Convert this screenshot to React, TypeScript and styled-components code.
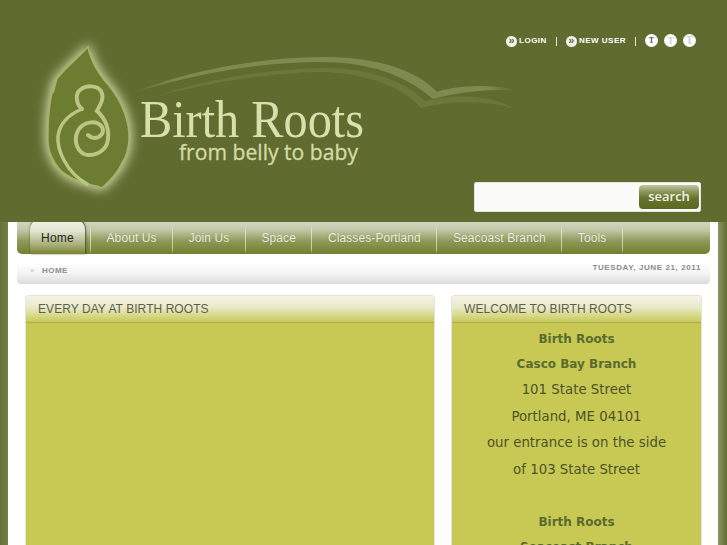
import styled, { createGlobalStyle } from 'styled-components';

const GlobalStyle = createGlobalStyle`
  html, body {
    margin: 0;
    padding: 0;
    height: 545px;
    overflow: hidden;
    background: #5f6b2f;
    font-family: "Liberation Sans", Arial, sans-serif;
  }
`;

const Header = styled.header`
  height: 222px;
  display: flex;
  justify-content: space-between;
  padding-right: 26px;
  box-sizing: border-box;
`;

const LogoSvg = styled.svg`
  display: block;
  flex: none;
  overflow: visible;
`;

const HeaderRight = styled.div`
  display: flex;
  flex-direction: column;
  align-items: flex-end;
  justify-content: space-between;
  padding: 33px 0 10px;
`;

const TopLinks = styled.div`
  display: flex;
  align-items: center;
  height: 14px;
  margin-right: 5px;
  color: #fff;
  font-size: 8px;
  font-weight: bold;
  letter-spacing: 0.5px;
`;

const TopLink = styled.a`
  display: flex;
  align-items: center;
  gap: 2px;
`;

const Arrow = styled.span`
  width: 11px;
  height: 11px;
  margin-top: 2px;
  border-radius: 50%;
  background: #f4f4ee;
  color: #5f6b2f;
  font-size: 11px;
  line-height: 9px;
  text-align: center;
  letter-spacing: 0;
`;

const Pipe = styled.span`
  width: 1px;
  height: 9px;
  margin: 2px 9px 0;
  background: #e8e8dc;
`;

const SizeDots = styled.div`
  display: flex;
  gap: 6px;
`;

const SizeDot = styled.span<{ $dim?: boolean; $size: number }>`
  width: 13px;
  height: 13px;
  border-radius: 50%;
  background: #fff;
  color: ${(p) => (p.$dim ? '#d2d2d2' : '#55555f')};
  font-family: "Liberation Serif", serif;
  font-size: ${(p) => p.$size}px;
  line-height: 13px;
  text-align: center;
  letter-spacing: 0;
`;

const SearchBox = styled.form`
  display: flex;
  justify-content: space-between;
  width: 227px;
  height: 30px;
  margin: 0;
  padding: 2px 1px 2px 3px;
  box-sizing: border-box;
  background: #fbfbf9;
  border: 1px solid #e4e4dc;
  border-radius: 2px;
`;

const SearchInput = styled.input`
  flex: 1;
  min-width: 0;
  border: 0;
  background: transparent;
  outline: none;
`;

const SearchButton = styled.button`
  flex: none;
  width: 60px;
  padding: 0 0 2px;
  border: 0;
  border-radius: 4px;
  background: linear-gradient(#c2c7a8 0%, #8c9659 28%, #66742c 55%, #5a6a22 100%);
  color: #f1f2e8;
  font-family: "Open Sans", sans-serif;
  font-size: 13px;
  font-weight: 600;
`;

const Page = styled.div`
  padding: 0 17px;
  height: 323px;
  overflow: hidden;
  background: linear-gradient(
    90deg,
    #66723a 0,
    #737f47 8px,
    #fff 8px,
    #fff 718px,
    #8c9666 718px,
    #5f6b2f 727px
  );
`;

const Nav = styled.nav`
  display: flex;
  height: 32px;
  padding-left: 13px;
  border-radius: 0 0 5px 5px;
  background: linear-gradient(#d3d6bf 0%, #c2c7a6 25%, #8e9957 60%, #727f2f 100%);
`;

const NavItem = styled.a`
  display: flex;
  align-items: center;
  height: 31px;
  padding: 0 15.5px;
  border-right: 1px solid;
  border-image: linear-gradient(transparent 10%, rgba(240, 242, 225, 0.7) 35%, rgba(240, 242, 225, 0.6) 85%, transparent) 1;
  color: #eef0e2;
  font-size: 12px;
  letter-spacing: 0.1px;
  text-shadow: 0 0 1px rgba(70, 80, 30, 0.5);
`;

const HomeTab = styled.a`
  display: flex;
  align-items: center;
  box-sizing: border-box;
  width: 55px;
  height: 36px;
  margin: -4px 5px 0 0;
  padding: 3px 0 0 11px;
  border-radius: 12px 12px 0 0;
  background: linear-gradient(#f0f1e6 0%, #e4e6d4 35%, #a6ae78 75%, #77832f 100%);
  box-shadow: 0 -1px 2px rgba(67, 77, 28, 0.7), 1px 0 2px rgba(60, 70, 25, 0.7);
  color: #23261a;
  font-size: 12px;
  letter-spacing: 0.25px;
`;

const NavDivider = styled.span`
  width: 1px;
  height: 32px;
  background: linear-gradient(transparent 10%, rgba(240, 242, 225, 0.7) 35%, rgba(240, 242, 225, 0.6) 85%, transparent);
`;

const Crumbs = styled.div`
  display: flex;
  justify-content: space-between;
  height: 22px;
  margin-top: 8px;
  padding: 0 9px 0 13px;
  border-radius: 0 0 4px 4px;
  background: linear-gradient(#fff 0%, #f6f6f6 45%, #dcdcdc 100%);
  color: #8d8d8d;
  font-size: 8px;
  font-weight: bold;
  letter-spacing: 0.5px;
`;

const CrumbTrail = styled.span`
  display: flex;
  gap: 7px;
  margin-top: 1px;
  align-items: center;
  height: 15px;
`;

const CrumbArrow = styled.span`
  color: #c0c0c0;
  font-weight: normal;
`;

const CrumbDate = styled.span`
  margin-top: 1px;
  letter-spacing: 0.6px;
`;

const Columns = styled.div`
  display: flex;
  justify-content: space-between;
  margin-top: 11px;
  padding: 0 8px;
`;

const Panel = styled.section<{ $width: number }>`
  width: ${(p) => p.$width}px;
  height: 300px;
  flex: none;
  box-sizing: border-box;
  background: #c8c955;
  border: 1px solid #e3e3da;
  border-bottom: 0;
  border-radius: 4px 4px 0 0;
`;

const PanelTitle = styled.h3`
  height: 27px;
  margin: 0;
  padding-left: 12px;
  box-sizing: border-box;
  background: linear-gradient(#f4f4e6 0%, #e8e9c4 45%, #c9ca58 100%);
  border-bottom: 1px solid #a9ab50;
  color: #5c5e50;
  font-size: 12px;
  font-weight: normal;
  line-height: 27px;
  letter-spacing: 0.06px;
`;

const PanelBody = styled.div`
  padding-top: 4px;
  text-align: center;
  font-family: "DejaVu Sans", Verdana, sans-serif;
  font-size: 13.33px;
  line-height: 26.5px;
  color: #4c5327;
`;

const Branch = styled.strong`
  display: block;
  color: #5a6b2e;
  font-size: 12px;
  line-height: 25px;
`;

const AddressLine = styled.div`
  min-height: 26.5px;
`;

const Logo = () => (
  <LogoSvg width="470" height="222" viewBox="0 0 470 222">
    <defs>
      <filter id="glow" x="-30%" y="-30%" width="160%" height="160%">
        <feGaussianBlur stdDeviation="6" />
      </filter>
      <linearGradient id="swoosh" gradientUnits="userSpaceOnUse" x1="130" x2="518" y1="0" y2="0">
        <stop offset="0" stopColor="#7d8a50" stopOpacity="0.1" />
        <stop offset="0.12" stopColor="#7d8a50" />
        <stop offset="0.92" stopColor="#7d8a50" />
        <stop offset="1" stopColor="#7d8a50" stopOpacity="0" />
      </linearGradient>
    </defs>
    <path
      d="M130 94C165 78 240 58 320 57C370 56 415 68 437 92C450 87 490 82 518 91C490 88 460 92 433 99C405 75 370 62 320 62C250 62 180 78 130 94Z"
      fill="url(#swoosh)"
    />
    <path
      d="M157 96C190 84 250 70 320 68C365 67 405 80 425 101C445 96 485 92 513 108C485 100 450 101 421 108C400 85 365 73 320 72C265 73 205 84 157 96Z"
      fill="#6b7839"
    />
    <path
      d="M88 47C90 58 95 70 110 87C122 102 130 122 129 140C128 155 122 170 102 188C88 184 70 180 60 170C52 160 47 150 48 135C48 115 50 95 56 80C65 68 78 58 88 47Z"
      fill="#e2e6b8"
      stroke="#e2e6b8"
      strokeWidth="4"
      filter="url(#glow)"
    />
    <path
      d="M88 47C90 58 95 70 110 87C122 102 130 122 129 140C128 155 122 170 102 188C88 184 70 180 60 170C52 160 47 150 48 135C48 115 50 95 56 80C65 68 78 58 88 47Z"
      fill="#6c7c30"
      stroke="#a6b26c"
      strokeWidth="1.5"
    />
    <g fill="none" stroke="#a6b26c" strokeWidth="2.5" strokeLinecap="round">
      <path d="M56 80L53 92" />
      <path d="M53 163C62 176 80 184 98 187" />
      <path d="M124 160L118 172" />
    </g>
    <g fill="none" stroke="#bcc583" strokeWidth="4" strokeLinecap="round">
      <path d="M82 109C76 104 75 94 80 90C86 85 97 85 101 91C105 98 100 105 97 111C105 118 111 130 107 144C103 153 92 157 84 154C76 150 73 138 79 129C85 121 97 120 102 127C105 133 100 138 94 138C92 138 90 137 88 135" />
      <path d="M82 109C70 114 60 122 58 136C57 150 66 172 87 184" strokeWidth="3.5" />
    </g>
    <text x="140" y="137" fill="#dadfae" fontFamily='"Liberation Serif", serif' fontSize="52" textLength="224" lengthAdjust="spacingAndGlyphs">
      Birth Roots
    </text>
    <text x="179" y="160" fill="#d5dba6" stroke="#d5dba6" strokeWidth="0.3" fontFamily='"Open Sans", sans-serif' fontSize="21" textLength="179" lengthAdjust="spacingAndGlyphs">
      from belly to baby
    </text>
  </LogoSvg>
);

const navItems = ['About Us', 'Join Us', 'Space', 'Classes-Portland', 'Seacoast Branch', 'Tools'];

export default function App() {
  return (
    <>
      <GlobalStyle />
      <Header>
        <Logo />
        <HeaderRight>
          <TopLinks>
            <TopLink>
              <Arrow>»</Arrow>LOGIN
            </TopLink>
            <Pipe />
            <TopLink>
              <Arrow>»</Arrow>NEW USER
            </TopLink>
            <Pipe />
            <SizeDots>
              <SizeDot $size={8}>T</SizeDot>
              <SizeDot $dim $size={10}>T</SizeDot>
              <SizeDot $dim $size={12}>T</SizeDot>
            </SizeDots>
          </TopLinks>
          <SearchBox onSubmit={(e) => e.preventDefault()}>
            <SearchInput />
            <SearchButton>search</SearchButton>
          </SearchBox>
        </HeaderRight>
      </Header>
      <Page>
        <Nav>
          <HomeTab>Home</HomeTab>
          <NavDivider />
          {navItems.map((item) => (
            <NavItem key={item}>{item}</NavItem>
          ))}
        </Nav>
        <Crumbs>
          <CrumbTrail>
            <CrumbArrow>»</CrumbArrow>HOME
          </CrumbTrail>
          <CrumbDate>TUESDAY, JUNE 21, 2011</CrumbDate>
        </Crumbs>
        <Columns>
          <Panel $width={410}>
            <PanelTitle>EVERY DAY AT BIRTH ROOTS</PanelTitle>
          </Panel>
          <Panel $width={251}>
            <PanelTitle>WELCOME TO BIRTH ROOTS</PanelTitle>
            <PanelBody>
              <Branch>Birth Roots</Branch>
              <Branch>Casco Bay Branch</Branch>
              <AddressLine>101 State Street</AddressLine>
              <AddressLine>Portland, ME 04101</AddressLine>
              <AddressLine>our entrance is on the side</AddressLine>
              <AddressLine>of 103 State Street</AddressLine>
              <AddressLine />
              <Branch>Birth Roots</Branch>
              <Branch>Seacoast Branch</Branch>
            </PanelBody>
          </Panel>
        </Columns>
      </Page>
    </>
  );
}
